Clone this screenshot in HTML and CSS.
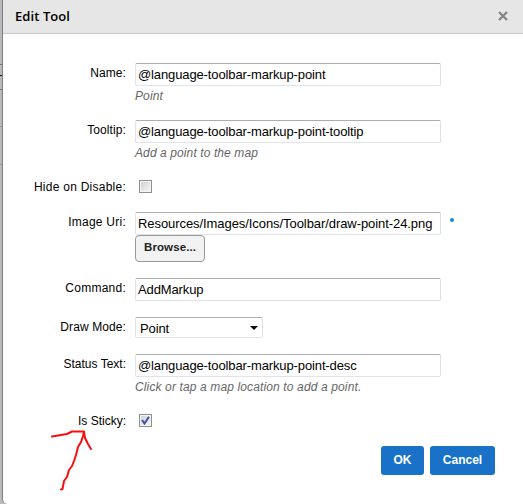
FILE: index.html
```html
<!DOCTYPE html>
<html lang="en">
<head>
<meta charset="utf-8">
<title>Edit Tool</title>
<link rel="stylesheet" href="styles.css">
</head>
<body>
<div class="backdrop"><i class="l1"></i><i class="l2"></i><i class="l3"></i><i class="l4"></i><i class="l5"></i></div>
<main class="dialog">
  <header class="head">
    <h1>Edit Tool</h1>
    <svg class="close" width="10" height="10" viewBox="0 0 10 10"><path d="M1 1L9 9M9 1L1 9" fill="none" stroke="#858585" stroke-width="2.3"/></svg>
  </header>
  <form class="form">
    <div class="row hinted"><label class="label">Name:</label><div><div class="input"><span>@language-toolbar-markup-point</span></div><p class="hint">Point</p></div></div>
    <div class="row hinted"><label class="label">Tooltip:</label><div><div class="input"><span>@language-toolbar-markup-point-tooltip</span></div><p class="hint">Add a point to the map</p></div></div>
    <div class="row check-row"><label class="label wide">Hide on Disable:</label><div><span class="check"></span></div></div>
    <div class="row image-row"><label class="label wide">Image Uri:</label><div><div class="input"><span class="uri">Resources/Images/Icons/Toolbar/draw-point-24.png</span></div><button type="button" class="browse">Browse...</button></div><span class="required"></span></div>
    <div class="row command-row"><label class="label wide">Command:</label><div><div class="input"><span>AddMarkup</span></div></div></div>
    <div class="row mode-row"><label class="label">Draw Mode:</label><div><div class="input select"><span>Point</span><svg width="8" height="4" viewBox="0 0 8 4"><path d="M0 0H8L4 4Z"/></svg></div></div></div>
    <div class="row hinted"><label class="label flush">Status Text:</label><div><div class="input"><span>@language-toolbar-markup-point-desc</span></div><p class="hint long">Click or tap a map location to add a point.</p></div></div>
    <div class="row check-row"><label class="label flush">Is Sticky:</label><div><span class="check"><svg width="9" height="9" viewBox="0 0 9 9"><path d="M1 4L3.5 7.5L8 .8" fill="none" stroke="#3c539a" stroke-width="2"/></svg></span></div></div>
    <footer class="actions"><button type="button" class="ok">OK</button><button type="button" class="cancel">Cancel</button></footer>
  </form>
</main>
<svg class="arrow" width="44" height="64" viewBox="0 0 44 64"><path d="M2 7.500L8 6.500L17 5L22 2.500H34L33 7L31 13L28 18L26 26L24 32L22 37L19 41L17 48L14 52L12.500 60L11 60.500M34 3L35 9L38 15L41 20" fill="none" stroke="#f51010" stroke-width="2" stroke-linejoin="round" stroke-linecap="round"/></svg>
</body>
</html>
```
FILE: styles.css
```css
* { box-sizing: border-box; }
body {
  margin: 0;
  display: flex;
  height: 504px;
  overflow: hidden;
  background: #b9b9b9;
  font-family: "Liberation Sans", Arial, sans-serif;
  font-size: 12px;
  color: #000;
}
.backdrop { width: 2px; display: flex; flex-direction: column; flex: none; }
.backdrop i { height: 1px; background: #777; }
.backdrop .l1 { margin-top: 64px; }
.backdrop .l2 { margin-top: 10px; background: #111; }
.backdrop .l3 { margin-top: 13px; }
.backdrop .l4 { margin-top: 36px; background: #999; }
.backdrop .l5 { margin-top: 37px; background: #999; }
.dialog {
  flex: 1;
  border-left: 1px solid #808080;
  border-bottom-left-radius: 5px;
  background: #fff;
}
.head {
  height: 34px;
  padding: 0 15px 1px 12px;
  display: flex;
  align-items: center;
  justify-content: space-between;
  background: #e6e6e6;
  border-bottom: 1px solid #c8c8c8;
}
h1 {
  margin: 0;
  font: 600 13px/18px "Open Sans", sans-serif;
  letter-spacing: .08px;
  color: #000;
}
.form { padding-top: 29px; }
.row { display: grid; grid-template-columns: 123px 306px 20px; column-gap: 9px; }
.label { text-align: right; line-height: 14px; padding-top: 3px; white-space: nowrap; letter-spacing: .1px; }
.label.wide { letter-spacing: .25px; }
.label.flush { letter-spacing: 0; }
.hinted { height: 57px; }
.check-row { height: 35px; }
.image-row { height: 66px; }
.command-row { height: 39px; }
.mode-row { height: 37px; }
.input {
  height: 23px;
  padding: 0 2px;
  display: flex;
  align-items: center;
  border: 1px solid #e2e3ea;
  border-top-color: #abadb3;
  border-right-color: #dbdfe6;
  border-radius: 2px;
  font-size: 13px;
  letter-spacing: -.12px;
  color: #000;
  white-space: nowrap;
}
.uri { letter-spacing: -.07px; }
.hint { margin: 3px 0 0; font-style: italic; line-height: 14px; color: #666; letter-spacing: .1px; }
.hint.long { letter-spacing: .13px; }
.check {
  display: flex;
  width: 13px;
  height: 13px;
  margin: 3px 0 0 4px;
  border: 1px solid #8e8f8f;
  padding: 1px;
  background: linear-gradient(135deg, #cfd3d8, #f4f4f4) content-box, #f4f4f4;
}
.browse {
  display: block;
  width: 70px;
  height: 27px;
  padding: 0 0 3px;
  border: 1px solid #999;
  border-radius: 4px;
  background: #f2f2f2;
  color: #222;
  font: bold 11.500px "Liberation Sans", sans-serif;
  letter-spacing: .1px;
}
.required { width: 4px; height: 4px; margin-top: 6px; border-radius: 50%; background: #1c86d1; }
.select { width: 128px; height: 21px; padding: 1px 4px 0; justify-content: space-between; }
.actions { display: flex; justify-content: flex-end; gap: 6px; padding-right: 28px; }
.actions button {
  height: 29px;
  padding: 0 0 2px;
  border: 0;
  border-radius: 3px;
  background: #1972c8;
  color: #fff;
  font: bold 12px "Liberation Sans", sans-serif;
}
.actions .ok { width: 43px; }
.actions .cancel { width: 65px; }
.arrow { position: absolute; left: 50px; top: 429px; }
```
